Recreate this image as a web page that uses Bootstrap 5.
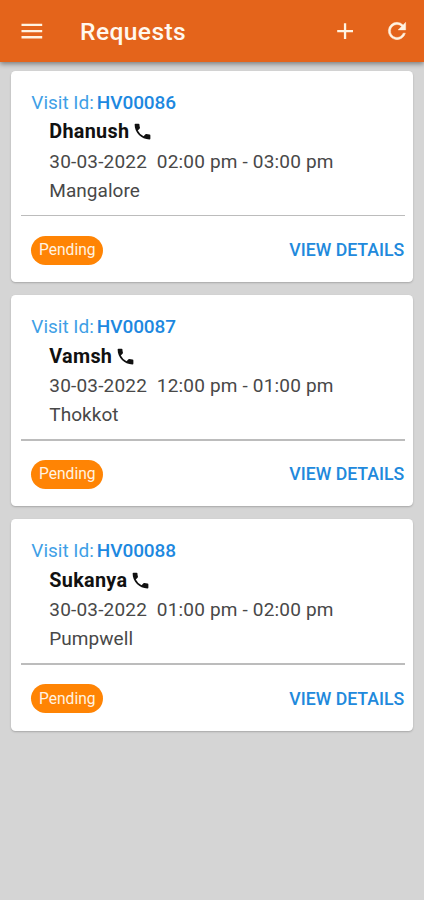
<!DOCTYPE html>
<html lang="en">
<head>
<meta charset="utf-8">
<meta name="viewport" content="width=device-width, initial-scale=1">
<title>Requests</title>
<link href="https://cdn.jsdelivr.net/npm/bootstrap@5.3.0/dist/css/bootstrap.min.css" rel="stylesheet">
<style>
body{background:#d5d5d5;font-family:Roboto,sans-serif;min-height:100vh;overflow:hidden}
.app-bar{height:62px;background:#e4641b;box-shadow:0 2px 5px rgba(0,0,0,.42);padding:0 14px 0 19.5px}
.app-title{font-size:24.6px;font-weight:500;line-height:30px;letter-spacing:.4px;margin-left:36.5px;padding-top:1px;color:#fff8ee}
.app-bar button{color:#fff3e2;line-height:0}
.app-bar svg{display:block}
.icon-refresh{margin-left:26.5px}
.requests{padding:8.7px 10.7px 0 11.3px;gap:13.1px}
.request{height:211.3px;border-radius:4.5px;box-shadow:0 1px 2px rgba(0,0,0,.22);padding:17px 8.3px 0 9.7px}
.visit{font-size:19px;line-height:29px;color:#3f9fe6;padding-left:10.3px;gap:3px}
.visit b{font-weight:500;color:#1d88e0;letter-spacing:-.08px}
.info{padding-left:28.3px;font-size:19px;color:#484848}
.person{font-size:19.8px;font-weight:700;line-height:31px;height:30px;letter-spacing:.3px;color:#111}
.person svg{margin-left:2.5px}
.when{line-height:30px;white-space:pre;letter-spacing:.18px}
.place{line-height:28px;letter-spacing:.05px}
.rule{height:1.5px;background:#bcbcbc;margin:10px 0 0}
.foot{height:68px;padding-left:10.3px}
.state{background:#ff8404;width:72px;height:29px;padding-top:1px;font-size:15.6px;font-weight:400;color:#fff3e2}
.details{font-size:17.7px;font-weight:500;color:#2189dc;padding-right:.7px}
</style>
</head>
<body>
<header class="app-bar d-flex align-items-center position-relative">
<button class="btn p-0 border-0" aria-label="Menu"><svg width="24" height="24" viewBox="0 0 24 24" fill="currentColor"><path d="M1.500 4.700h20.700v2.300h-20.700zM1.500 10.900h20.700v2.300h-20.700zM1.500 17.100h20.700v2.300h-20.700z"/></svg></button>
<h1 class="app-title mb-0">Requests</h1>
<button class="btn p-0 border-0 ms-auto" aria-label="Add"><svg width="26" height="26" viewBox="0 0 26 26" fill="currentColor"><path d="M11.900 5.300h2.300v6.700H21v2.300h-6.800v6.700h-2.300v-6.700H5.200V12h6.700z"/></svg></button>
<button class="btn p-0 border-0 icon-refresh" aria-label="Refresh"><svg width="26" height="26" viewBox="0 0 24 24" fill="currentColor" stroke="currentColor" stroke-width=".4"><path d="M17.650 6.350A7.960 7.960 0 0 0 12 4a8 8 0 1 0 7.730 10h-2.080A6 6 0 1 1 12 6c1.660 0 3.140.690 4.220 1.780L13 11h7V4z"/></svg></button>
</header>
<main class="requests d-flex flex-column">
<article class="request bg-white">
<div class="visit d-flex"><span>Visit Id:</span><b>HV00086</b></div>
<div class="info">
<div class="person d-flex align-items-center"><span>Dhanush</span><svg width="21" height="21" viewBox="0 0 24 24" fill="currentColor"><path d="M20 15.500c-1.250 0-2.450-.2-3.570-.570a1.020 1.020 0 0 0-1.020.240l-2.200 2.200a15.100 15.100 0 0 1-6.590-6.590l2.200-2.210a.96.96 0 0 0 .250-1A11.400 11.400 0 0 1 8.500 4a1 1 0 0 0-1-1H4a1 1 0 0 0-1 1c0 9.390 7.610 17 17 17a1 1 0 0 0 1-1v-3.500a1 1 0 0 0-1-1z"/></svg></div>
<div class="when">30-03-2022  02:00 pm - 03:00 pm</div>
<div class="place">Mangalore</div>
</div>
<div class="rule"></div>
<div class="foot d-flex align-items-center justify-content-between"><span class="state rounded-pill d-flex align-items-center justify-content-center">Pending</span><a class="details text-decoration-none" href="#">VIEW DETAILS</a></div>
</article>
<article class="request bg-white">
<div class="visit d-flex"><span>Visit Id:</span><b>HV00087</b></div>
<div class="info">
<div class="person d-flex align-items-center"><span>Vamsh</span><svg width="21" height="21" viewBox="0 0 24 24" fill="currentColor"><path d="M20 15.500c-1.250 0-2.450-.2-3.570-.570a1.020 1.020 0 0 0-1.020.240l-2.200 2.200a15.100 15.100 0 0 1-6.590-6.590l2.200-2.210a.96.96 0 0 0 .250-1A11.400 11.400 0 0 1 8.500 4a1 1 0 0 0-1-1H4a1 1 0 0 0-1 1c0 9.390 7.610 17 17 17a1 1 0 0 0 1-1v-3.500a1 1 0 0 0-1-1z"/></svg></div>
<div class="when">30-03-2022  12:00 pm - 01:00 pm</div>
<div class="place">Thokkot</div>
</div>
<div class="rule"></div>
<div class="foot d-flex align-items-center justify-content-between"><span class="state rounded-pill d-flex align-items-center justify-content-center">Pending</span><a class="details text-decoration-none" href="#">VIEW DETAILS</a></div>
</article>
<article class="request bg-white">
<div class="visit d-flex"><span>Visit Id:</span><b>HV00088</b></div>
<div class="info">
<div class="person d-flex align-items-center"><span>Sukanya</span><svg width="21" height="21" viewBox="0 0 24 24" fill="currentColor"><path d="M20 15.500c-1.250 0-2.450-.2-3.570-.570a1.020 1.020 0 0 0-1.020.240l-2.200 2.200a15.100 15.100 0 0 1-6.590-6.590l2.200-2.210a.96.96 0 0 0 .250-1A11.400 11.400 0 0 1 8.500 4a1 1 0 0 0-1-1H4a1 1 0 0 0-1 1c0 9.390 7.610 17 17 17a1 1 0 0 0 1-1v-3.500a1 1 0 0 0-1-1z"/></svg></div>
<div class="when">30-03-2022  01:00 pm - 02:00 pm</div>
<div class="place">Pumpwell</div>
</div>
<div class="rule"></div>
<div class="foot d-flex align-items-center justify-content-between"><span class="state rounded-pill d-flex align-items-center justify-content-center">Pending</span><a class="details text-decoration-none" href="#">VIEW DETAILS</a></div>
</article>
</main>
<script src="https://cdn.jsdelivr.net/npm/bootstrap@5.3.0/dist/js/bootstrap.bundle.min.js"></script>
</body>
</html>
